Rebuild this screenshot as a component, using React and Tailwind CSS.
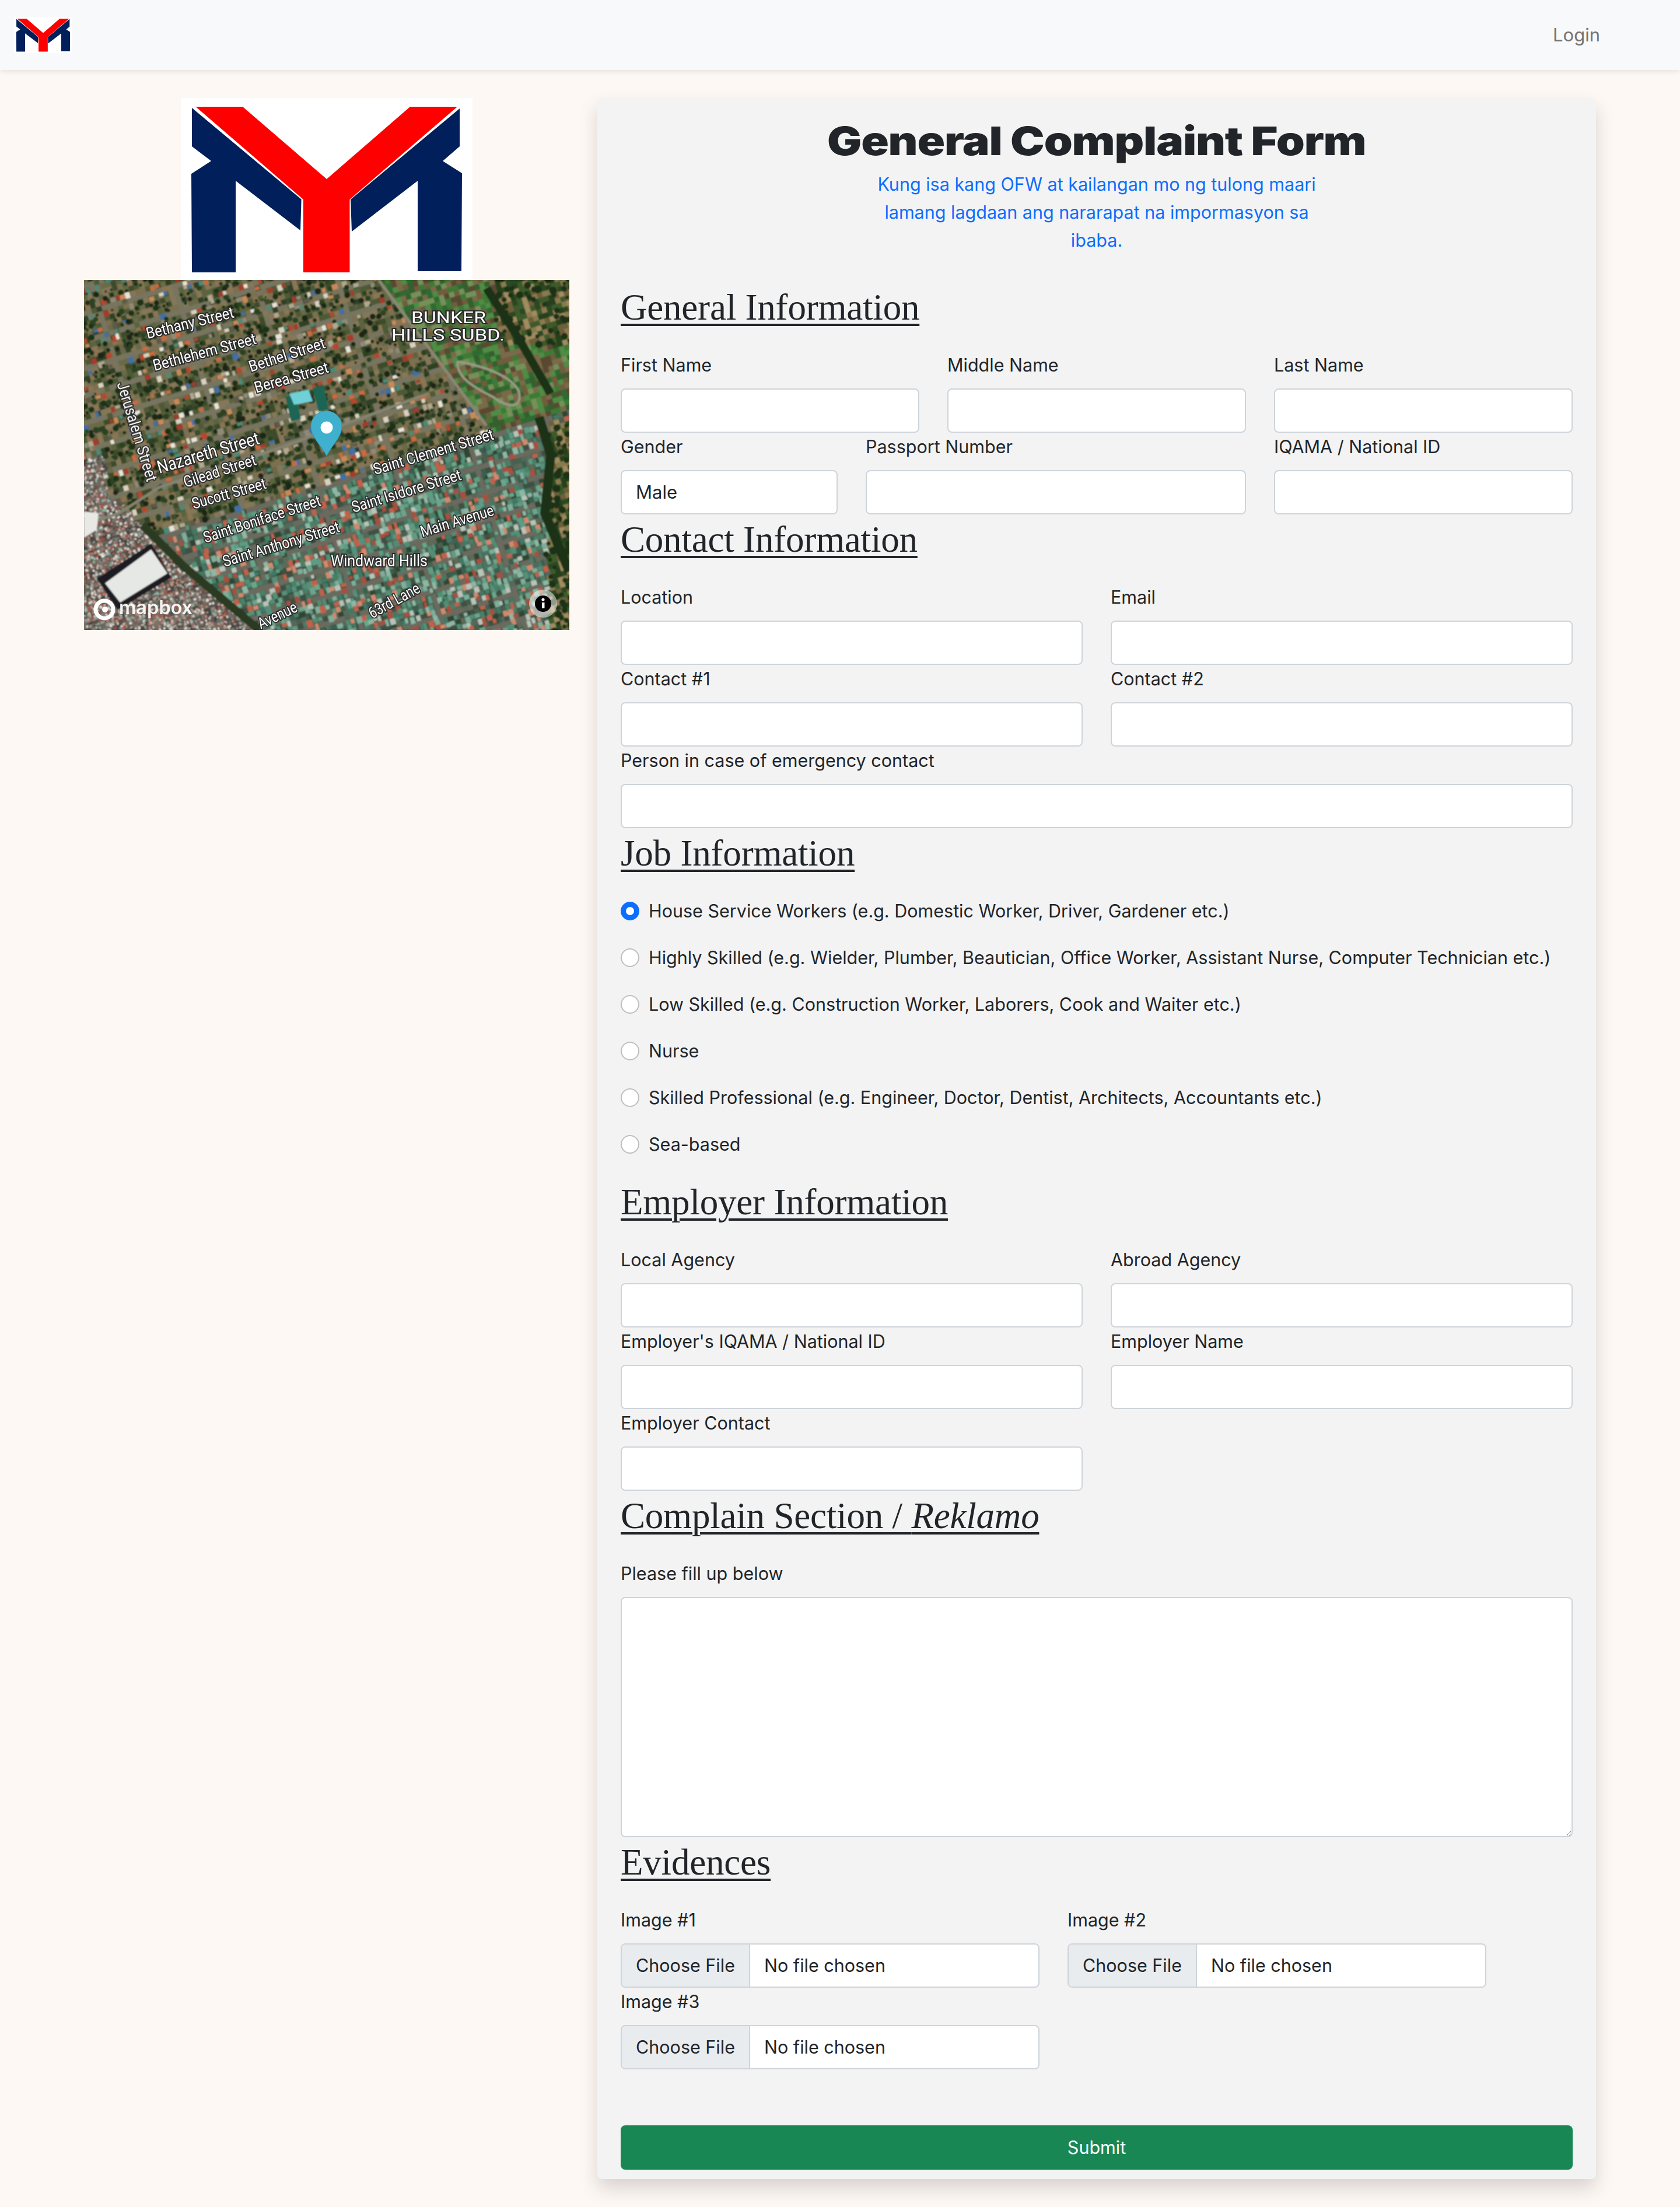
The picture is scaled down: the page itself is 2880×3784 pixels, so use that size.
import React from "react";

function Logo({ className }) {
  return (
    <svg viewBox="0 0 500 312" className={className}>
      <rect width="500" height="312" fill="#fff" />
      <polygon fill="#001f5b" points="19,17 206.6,173.7 205,227 94,142 94,299 19,299 18,130 52,108 19,83" />
      <polygon fill="#001f5b" points="478,18 291,174 293,229 406,142 406,297 481,297 482,129 449,108 478,83" />
      <polygon fill="#ff0000" points="25.5,15 106,15 250,139 393,15 474,15 289.5,174 289.5,299 210,299 210,174" />
    </svg>
  );
}

function makeRng(seed) {
  let s = seed;
  return () => {
    s = (s * 1664525 + 1013904223) % 4294967296;
    return s / 4294967296;
  };
}

const ROOF = {
  dense: ["#4f8f75", "#6aa68c", "#3f7a66", "#a8503f", "#5f9c84", "#7fae9a", "#b9c4b8", "#38604f", "#55907a", "#c4604a", "#8fb8a4", "#4a8068", "#d08a70"],
  suburb: ["#b5462f", "#c96a3f", "#d8d2c0", "#8f8a78", "#a53a2a", "#e8e4d8", "#5d5a48", "#c98a5a", "#3f6fa8", "#4c8a78", "#b0a890"],
  city: ["#d8d4cc", "#a8a49c", "#b0503f", "#c89080", "#70706a", "#e8e6e0", "#4a4a48", "#90b0a0", "#8a5040"],
};
const GROUND = {
  dense: ["#4a5f50", "#55685a", "#3f4f42", "#5d6a58", "#2f4430"],
  suburb: ["#5c6440", "#6a6a48", "#7c7050", "#4d5a36", "#3c4c2c", "#84785a", "#2f4026", "#8a7454"],
  city: ["#55524c", "#6a665e", "#45433f", "#7a756c"],
  fields: ["#3c7a36", "#4f8c44", "#6f5d3e", "#5a4a30", "#2f6a30", "#76905a", "#7a6a48", "#355f2e"],
  veg: ["#25401f", "#3c5a2a", "#6e5f3a", "#8a7a50", "#2c4a24", "#a08c60"],
};

function zoneOf(x, y) {
  if (y > 420 + 0.9 * (x - 100) || (x < 32 && y > 300)) return "city";
  if (x > 790 && y > 240) return "veg";
  if (y > 430 - 0.3 * (x - 130)) return "dense";
  if (x > 500 + 0.75 * y) return y < 110 && x > 700 ? "veg" : "fields";
  return "suburb";
}

function buildScene() {
  const r = makeRng(20240);
  const ground = [];
  const roofs = [];
  const pick = (a) => a[Math.floor(r() * a.length)];
  const cs = Math.cos((17 * Math.PI) / 180);
  const sn = Math.sin((17 * Math.PI) / 180);
  const step = 9;
  for (let u = -300; u < 1100; u += step) {
    for (let v = -300; v < 900; v += step) {
      const x = u * cs + v * sn;
      const y = -u * sn + v * cs;
      if (x < -12 || x > 844 || y < -12 || y > 612) continue;
      const z = zoneOf(x, y);
      const rowpos = ((v % 45) + 45) % 45;
      const colpos = ((u % 135) + 135) % 135;
      const onRoad = z !== "fields" && z !== "veg" && z !== "city" && (rowpos < 9 || colpos < 9) && r() < 0.72;
      const t = `translate(${x.toFixed(1)} ${y.toFixed(1)}) rotate(-17)`;
      const key = u + "_" + v;
      const fill = onRoad ? (z === "dense" ? "#6a6a5e" : "#77755f") : pick(GROUND[z]);
      ground.push(<rect key={key} width={step + 1} height={step + 1} fill={fill} transform={t} />);
      if (onRoad) continue;
      const a = r();
      if (z === "dense") {
        if (a < 0.8) roofs.push(<rect key={key} x={-2 + r() * 4} y={-2 + r() * 4} width={5 + r() * 5} height={6 + r() * 7} fill={pick(ROOF.dense)} transform={t} />);
      } else if (z === "suburb") {
        const nearRoad = rowpos < 18 || rowpos > 35;
        if (nearRoad && a < 0.42) roofs.push(<rect key={key} x={-1 + r() * 3} y={-1 + r() * 3} width={5 + r() * 6} height={5 + r() * 6} fill={pick(ROOF.suburb)} transform={t} />);
        else if (a < 0.6) roofs.push(<circle key={key} cx={r() * 8} cy={r() * 8} r={2 + r() * 3.5} fill={pick(["#1f3119", "#2b4223", "#1a2816"])} transform={t} />);
      } else if (z === "city") {
        for (let j = 0; j < 4; j++) {
          roofs.push(<rect key={key + j} x={r() * 7} y={r() * 7} width={2 + r() * 3} height={2 + r() * 3} fill={pick(ROOF.city)} transform={t} />);
        }
      } else if (z === "veg") {
        if (a < 0.3) roofs.push(<circle key={key} cx={r() * 8} cy={r() * 8} r={3 + r() * 4} fill="#1c3019" transform={t} />);
      }
    }
  }
  return [...ground, ...roofs];
}
const scene = buildScene();

const mapLabels = [
  ["Bethany Street", 109, 101, -14, 154, 27],
  ["Bethlehem Street", 121, 156, -15, 182, 27],
  ["Bethel Street", 286, 158, -18, 136, 27],
  ["Berea Street", 295, 194, -16, 131, 27],
  ["Jerusalem Street", 56, 178, 73, 177, 27],
  ["Nazareth Street", 129, 332, -16.5, 181, 31],
  ["Gilead Street", 174, 356, -18, 129, 27],
  ["Sucott Street", 188, 393, -16, 131, 27],
  ["Saint Boniface Street", 208, 451, -18, 210, 27],
  ["Saint Anthony Street", 241, 492, -17, 208, 27],
  ["Saint Clement Street", 499, 334, -16.6, 214, 27],
  ["Saint Isidore Street", 462, 399, -17, 195, 27],
  ["Main Avenue", 580, 441, -17, 130, 27],
  ["Windward Hills", 423, 491, 0, 166, 27],
  ["63rd Lane", 494, 581, -29, 96, 27],
  ["Avenue", 303, 599, -26, 72, 27],
  ["BUNKER", 561, 74, 0, 128, 28],
  ["HILLS SUBD.", 527, 104, 0, 194, 28],
];

function SatelliteMap() {
  return (
    <svg viewBox="0 0 832 600" className="block w-[832px] h-[600px]">
      <defs>
        <filter id="soft"><feGaussianBlur stdDeviation="0.8" /></filter>
      </defs>
      <g filter="url(#soft)">
        <rect width="832" height="600" fill="#5c6440" />
        {scene}
        <polyline points="505,0 690,250" fill="none" stroke="#8a8874" strokeWidth="5" />
        <polyline points="690,14 745,100 800,195" fill="none" stroke="#1c3018" strokeWidth="14" />
        <path d="M640 140 C700 150 735 170 745 190 C752 215 735 225 700 200 C660 180 640 165 640 140" fill="none" stroke="#9a9a84" strokeWidth="4" />
        <polyline points="100,420 170,490 300,600" fill="none" stroke="#2b3a24" strokeWidth="14" />
        <polyline points="0,420 60,400 130,355 330,290 590,195" fill="none" stroke="#85836f" strokeWidth="5" />
        <polyline points="780,235 800,300 790,400 832,500" fill="none" stroke="#1f3319" strokeWidth="16" />
        <polygon points="345,200 362,196 372,238 355,243" fill="#1f6555" />
        <polygon points="392,185 410,180 420,222 402,226" fill="#1f6555" />
        <polygon points="352,195 385,188 392,208 360,214" fill="#6fd0d8" />
        <polygon points="22,512 115,452 150,510 58,566" fill="#1c1f20" />
        <polygon points="36,520 115,462 143,503 62,553" fill="#e6e8e6" />
        <polygon points="0,397 25,400 22,428 0,442" fill="#e8e8e4" />
      </g>
      {mapLabels.map(([t, x, y, a, len, fs]) => (
        <text
          key={t}
          x={x}
          y={y}
          textLength={len}
          lengthAdjust="spacingAndGlyphs"
          transform={`rotate(${a} ${x} ${y})`}
          fontFamily="Roboto, sans-serif"
          fontWeight="400"
          fontSize={fs}
          fill="#fff"
          stroke="#2c2c2c"
          strokeWidth="4"
          paintOrder="stroke"
        >
          {t}
        </text>
      ))}
      <path d="M416 302 C408 284 389 270 389 251 A26.5 26.5 0 0 1 442 251 C442 270 424 284 416 302 Z" fill="#3fb1ce" stroke="#3a97ae" strokeWidth="1" />
      <circle cx="416" cy="253" r="10.5" fill="#fff" />
      <circle cx="35" cy="565" r="15" fill="none" stroke="#fff" strokeWidth="7" />
      <circle cx="36" cy="565" r="5" fill="#fff" />
      <text x="60" y="573" fontFamily="Inter, sans-serif" fontWeight="600" fontSize="33" fill="#fff" fillOpacity="0.92" textLength="126" lengthAdjust="spacingAndGlyphs">mapbox</text>
      <circle cx="787" cy="555" r="24" fill="#fff" fillOpacity="0.5" />
      <circle cx="787" cy="555" r="14" fill="#000" />
      <rect x="785" y="553" width="4.5" height="10" fill="#fff" />
      <circle cx="787" cy="548" r="2.6" fill="#fff" />
    </svg>
  );
}

const inputCls = "block w-full h-[76px] rounded-[8px] border-2 border-[#ced4da] bg-white px-[24px] text-[31px] text-[#212529] outline-none";

function Field({ label, span }) {
  return (
    <div className={span}>
      <label className="block h-[48px] mb-[16px] text-[30.5px] leading-[48px]">{label}</label>
      <input type="text" className={inputCls} />
    </div>
  );
}

function Section({ children }) {
  return (
    <h3 className="h-[118px] m-0 font-['Liberation_Serif',serif] text-[63px] leading-[80px] font-normal underline decoration-[4px] underline-offset-[7px] pt-[3px] tracking-[-0.2px]">
      {children}
    </h3>
  );
}

function Radio({ label, checked }) {
  return (
    <label className="flex items-center h-[48px] mb-[32px] text-[30.5px] leading-[48px]">
      <input
        type="radio"
        name="job"
        defaultChecked={checked}
        className="appearance-none w-[32px] h-[32px] rounded-full border-2 border-[#bfbfbf] bg-white mr-[16px] checked:border-[9px] checked:border-[#0d6efd]"
      />
      {label}
    </label>
  );
}

function FileField({ label }) {
  return (
    <div className="w-[718px]">
      <label className="block h-[48px] mb-[16px] text-[30.5px] leading-[48px]">{label}</label>
      <div className="flex h-[76px] rounded-[8px] border-2 border-[#ced4da] bg-white overflow-hidden text-[30.5px] leading-[72px]">
        <span className="w-[220px] px-[24px] bg-[#e9ecef] border-r-2 border-[#ced4da] whitespace-nowrap">Choose File</span>
        <span className="pl-[24px] whitespace-nowrap">No file chosen</span>
      </div>
    </div>
  );
}

export default function App() {
  return (
    <div className="min-h-[3784px] bg-[#fdf8f4] font-['Inter',sans-serif] text-[#212529]">
      <nav className="flex h-[120px] items-center justify-between bg-[#f8f9fa] pl-[24px] pr-[137px] shadow-[0_4px_8px_rgba(0,0,0,0.075)] relative">
        <Logo className="block w-[100px] h-[62px]" />
        <a className="text-[31px] text-[#737373]">Login</a>
      </nav>
      <div className="flex gap-[48px] px-[144px] pt-[48px] pb-[48px]">
        <div className="w-[832px] shrink-0">
          <div className="flex justify-center">
            <Logo className="block w-[500px] h-[312px]" />
          </div>
          <SatelliteMap />
        </div>
        <main className="w-[1712px] shrink-0 rounded-[8px] bg-[#f3f3f3] px-[40px] pb-[16px] shadow-[0_16px_32px_rgba(0,0,0,0.15)]">
          <div className="h-[124px] pt-[41px] text-center">
            <h1 className="inline-block m-0 text-[68px] leading-[64px] font-black scale-x-[1.155] tracking-[-1px] whitespace-nowrap">General Complaint Form</h1>
          </div>
          <p className="mx-auto mb-[48px] w-[816px] text-center text-[30.5px] leading-[48px] text-[#0d6efd]">
            Kung isa kang OFW at kailangan mo ng tulong maari lamang lagdaan ang nararapat na impormasyon sa ibaba.
          </p>

          <Section>General Information</Section>
          <div className="grid grid-cols-12 gap-x-[48px]">
            <Field label="First Name" span="col-span-4" />
            <Field label="Middle Name" span="col-span-4" />
            <Field label="Last Name" span="col-span-4" />
            <div className="col-span-3">
              <label className="block h-[48px] mb-[16px] text-[30.5px] leading-[48px]">Gender</label>
              <select className={inputCls + " appearance-none"} defaultValue="Male">
                <option>Male</option>
                <option>Female</option>
              </select>
            </div>
            <Field label="Passport Number" span="col-span-5" />
            <Field label="IQAMA / National ID" span="col-span-4" />
          </div>

          <Section>Contact Information</Section>
          <div className="grid grid-cols-2 gap-x-[48px]">
            <Field label="Location" />
            <Field label="Email" />
            <Field label="Contact #1" />
            <Field label="Contact #2" />
            <Field label="Person in case of emergency contact" span="col-span-2" />
          </div>

          <Section>Job Information</Section>
          <Radio checked label="House Service Workers (e.g. Domestic Worker, Driver, Gardener etc.)" />
          <Radio label="Highly Skilled (e.g. Wielder, Plumber, Beautician, Office Worker, Assistant Nurse, Computer Technician etc.)" />
          <Radio label="Low Skilled (e.g. Construction Worker, Laborers, Cook and Waiter etc.)" />
          <Radio label="Nurse" />
          <Radio label="Skilled Professional (e.g. Engineer, Doctor, Dentist, Architects, Accountants etc.)" />
          <Radio label="Sea-based" />

          <Section>Employer Information</Section>
          <div className="grid grid-cols-2 gap-x-[48px]">
            <Field label="Local Agency" />
            <Field label="Abroad Agency" />
            <Field label="Employer's IQAMA / National ID" />
            <Field label="Employer Name" />
            <Field label="Employer Contact" />
          </div>

          <Section>
            Complain Section / <em className="font-medium">Reklamo</em>
          </Section>
          <label className="block h-[48px] mb-[16px] text-[30.5px] leading-[48px]">Please fill up below</label>
          <textarea className="block w-full h-[412px] rounded-[8px] border-2 border-[#ced4da] bg-white outline-none" />

          <Section>Evidences</Section>
          <div className="flex flex-wrap gap-x-[48px]">
            <FileField label="Image #1" />
            <FileField label="Image #2" />
            <FileField label="Image #3" />
          </div>

          <button className="mt-[96px] block w-full h-[76px] rounded-[8px] bg-[#198754] text-[30.5px] text-white">Submit</button>
        </main>
      </div>
    </div>
  );
}
